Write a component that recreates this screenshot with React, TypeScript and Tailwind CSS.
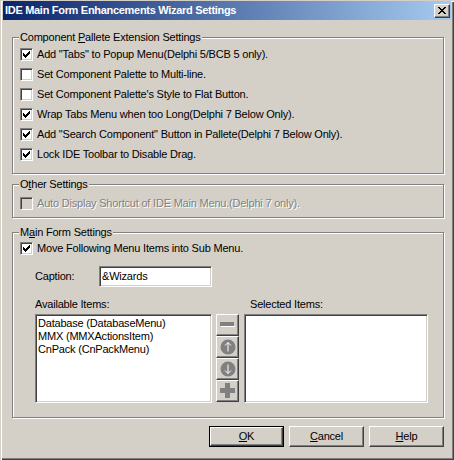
import React from "react";

const sunken =
  "border border-t-[#808080] border-l-[#808080] border-b-white border-r-white shadow-[inset_1px_1px_#404040,inset_-1px_-1px_#D4D0C8]";
const raised =
  "border border-t-white border-l-white border-b-[#404040] border-r-[#404040] shadow-[inset_-1px_-1px_#808080]";

const CheckMark = () => (
  <svg width="7" height="7" viewBox="0 0 7 7" shapeRendering="crispEdges">
    <rect x="0" y="2" width="1" height="3" fill="#000" />
    <rect x="1" y="3" width="1" height="3" fill="#000" />
    <rect x="2" y="4" width="1" height="3" fill="#000" />
    <rect x="3" y="3" width="1" height="3" fill="#000" />
    <rect x="4" y="2" width="1" height="3" fill="#000" />
    <rect x="5" y="1" width="1" height="3" fill="#000" />
    <rect x="6" y="0" width="1" height="3" fill="#000" />
  </svg>
);

const CheckRow = ({
  label,
  checked = false,
  disabled = false,
}: {
  label: React.ReactNode;
  checked?: boolean;
  disabled?: boolean;
}) => (
  <div className="flex h-[20px] items-center gap-[4px]">
    <div
      className={`flex h-[13px] w-[13px] shrink-0 items-center justify-center ${sunken} ${
        disabled ? "bg-[#D4D0C8]" : "bg-white"
      }`}
    >
      {checked && <CheckMark />}
    </div>
    <span
      className={
        disabled ? "text-[#808080] [text-shadow:1px_1px_0_#fff]" : "text-black"
      }
    >
      {label}
    </span>
  </div>
);

const Group = ({
  title,
  className,
  children,
}: {
  title: React.ReactNode;
  className: string;
  children: React.ReactNode;
}) => (
  <div
    className={`relative border border-[#808080] shadow-[inset_1px_1px_#fff,1px_1px_#fff] ${className}`}
  >
    <div className="absolute -top-[7px] left-[6px] bg-[#D4D0C8] px-[1px] leading-[13px]">
      {title}
    </div>
    {children}
  </div>
);

const SideButton = ({ children }: { children: React.ReactNode }) => (
  <div
    className={`flex h-[22px] w-[23px] items-center justify-center bg-[#D4D0C8] ${raised}`}
  >
    {children}
  </div>
);

const DialogButton = ({
  children,
  isDefault = false,
}: {
  children: React.ReactNode;
  isDefault?: boolean;
}) => (
  <div
    className={`h-[21px] w-[75px] ${isDefault ? "border border-black" : ""}`}
  >
    <div
      className={`flex h-full w-full items-center justify-center ${raised}`}
    >
      {children}
    </div>
  </div>
);

export default function App() {
  return (
    <div className="flex h-[460px] w-[454px] flex-col bg-[#D4D0C8] pt-[1px] font-['Liberation_Sans',Arial,sans-serif] text-[11px] leading-[13px] tracking-[-0.2px] text-black shadow-[inset_1px_1px_#D4D0C8,inset_2px_2px_#fff,inset_-1px_-1px_#404040,inset_-2px_-2px_#808080]">
      {/* title bar */}
      <div className="mx-[3px] flex h-[19px] items-center justify-between bg-[linear-gradient(to_right,#0A246A,#A6CAF0)] pl-[2px] pr-[1px]">
        <span className="text-[11px] font-bold tracking-[-0.3px] text-white">
          IDE Main Form Enhancements Wizard Settings
        </span>
        <div
          className={`flex h-[14px] w-[16px] items-center justify-center bg-[#D4D0C8] ${raised}`}
        >
          <svg width="8" height="7" viewBox="0 0 8 7" shapeRendering="crispEdges">
            <path
              d="M0 0h2v1h-2zM6 0h2v1h-2zM1 1h2v1h-2zM5 1h2v1h-2zM2 2h4v1h-4zM3 3h2v1h-2zM2 4h4v1h-4zM1 5h2v1h-2zM5 5h2v1h-2zM0 6h2v1h-2zM6 6h2v1h-2z"
              fill="#000"
            />
          </svg>
        </div>
      </div>

      <div className="flex flex-col pl-[12px] pr-[10px]">
        <Group
          className="mt-[17px] pb-[9px] pl-[7px] pt-[6px]"
          title={
            <>
              Component <u>P</u>allete Extension Settings
            </>
          }
        >
          <CheckRow checked label={'Add "Tabs" to Popup Menu(Delphi 5/BCB 5 only).'} />
          <CheckRow label="Set Component Palette to Multi-line." />
          <CheckRow label="Set Component Palette's Style to Flat Button." />
          <CheckRow checked label="Wrap Tabs Menu when too Long(Delphi 7 Below Only)." />
          <CheckRow
            checked
            label={'Add "Search Component" Button in Pallete(Delphi 7 Below Only).'}
          />
          <CheckRow checked label="Lock IDE Toolbar to Disable Drag." />
        </Group>

        <Group
          className="mt-[10px] pb-[4px] pl-[7px] pt-[8px]"
          title={
            <>
              O<u>t</u>her Settings
            </>
          }
        >
          <CheckRow disabled label="Auto Display Shortcut of IDE Main Menu.(Delphi 7 only)." />
        </Group>

        <Group
          className="mt-[14px] pb-[14px] pl-[7px] pr-[15px] pt-[5px]"
          title={
            <>
              M<u>a</u>in Form Settings
            </>
          }
        >
          <CheckRow checked label="Move Following Menu Items into Sub Menu." />
          <div className="mt-[8px] flex items-center pl-[15px]">
            <span className="w-[64px]">Caption:</span>
            <div className={`flex h-[21px] w-[113px] items-center bg-white pl-[2px] ${sunken}`}>
              &amp;Wizards
            </div>
          </div>
          <div className="mt-[11px] flex pl-[15px]">
            <span className="w-[215px]">Available Items:</span>
            <span>Selected Items:</span>
          </div>
          <div className="mt-[3px] flex pl-[15px]">
            <div className={`h-[89px] w-[177px] bg-white px-[2px] pt-[2px] ${sunken}`}>
              <div>Database (DatabaseMenu)</div>
              <div>MMX (MMXActionsItem)</div>
              <div>CnPack (CnPackMenu)</div>
            </div>
            <div className="ml-[4px] flex flex-col">
              <SideButton>
                <svg width="15" height="6" viewBox="0 0 15 6" shapeRendering="crispEdges">
                  <rect x="0" y="0" width="14" height="4" fill="#808080" />
                  <rect x="1" y="4" width="14" height="1" fill="#fff" />
                </svg>
              </SideButton>
              <SideButton>
                <svg width="16" height="16" viewBox="0 0 16 16">
                  <circle cx="8" cy="8" r="7.5" fill="#808080" />
                  <path d="M8 3.5v9M5 6.5l3-3 3 3" stroke="#fff" strokeWidth="1" fill="none" />
                </svg>
              </SideButton>
              <SideButton>
                <svg width="16" height="16" viewBox="0 0 16 16">
                  <circle cx="8" cy="8" r="7.5" fill="#808080" />
                  <path d="M8 3.5v9M5 9.5l3 3 3-3" stroke="#fff" strokeWidth="1" fill="none" />
                </svg>
              </SideButton>
              <SideButton>
                <svg width="16" height="16" viewBox="0 0 16 16" shapeRendering="crispEdges">
                  <path d="M5 0h5v5h5v5h-5v5h-5v-5h-5v-5h5z" fill="#808080" />
                </svg>
              </SideButton>
            </div>
            <div className={`ml-[5px] h-[89px] w-[184px] bg-white ${sunken}`} />
          </div>
        </Group>

        <div className="mt-[8px] flex justify-end gap-[5px]">
          <DialogButton isDefault>
            <u>O</u>K
          </DialogButton>
          <DialogButton>
            <u>C</u>ancel
          </DialogButton>
          <DialogButton>
            <u>H</u>elp
          </DialogButton>
        </div>
      </div>
    </div>
  );
}
